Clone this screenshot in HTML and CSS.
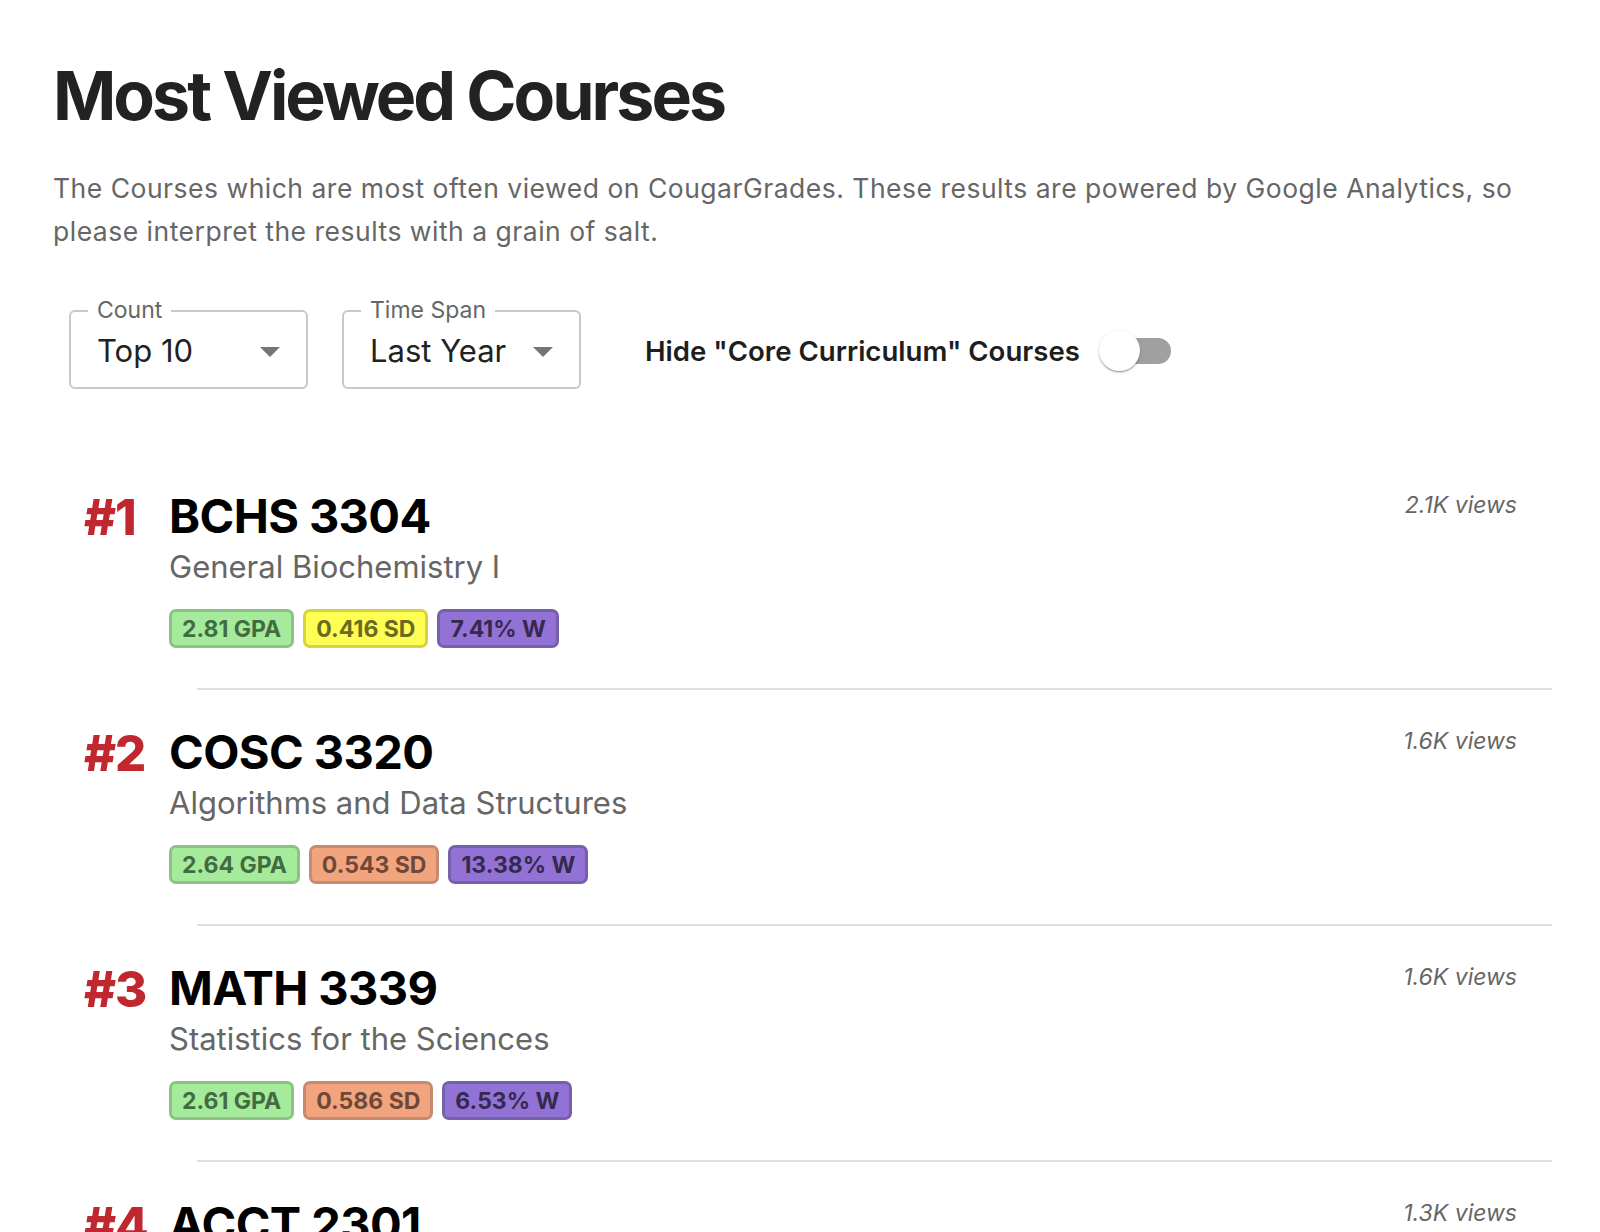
FILE: index.html
```html
<!DOCTYPE html>
<html>
<head>
<meta charset="utf-8">
<link rel="stylesheet" href="styles.css">
</head>
<body>
<main class="page">
  <h1 class="title">Most Viewed Courses</h1>
  <p class="intro">The Courses which are most often viewed on CougarGrades. These results are powered by Google Analytics, so please interpret the results with a grain of salt.</p>

  <div class="controls">
    <div class="select">
      <span class="select-label">Count</span>
      <span class="select-value">Top 10</span>
      <span class="caret"></span>
    </div>
    <div class="select">
      <span class="select-label">Time Span</span>
      <span class="select-value">Last Year</span>
      <span class="caret"></span>
    </div>
    <label class="switch-row">
      <span class="switch-text">Hide "Core Curriculum" Courses</span>
      <span class="switch"><span class="track"></span><span class="thumb"></span></span>
    </label>
  </div>

  <ul class="list">
    <li class="item">
      <div class="rank">#1</div>
      <div class="body">
        <div class="code">BCHS 3304</div>
        <div class="name">General Biochemistry I</div>
        <div class="badges">
          <span class="badge gpa">2.81 GPA</span>
          <span class="badge sd-yellow">0.416 SD</span>
          <span class="badge wd">7.41% W</span>
        </div>
      </div>
      <div class="views">2.1K views</div>
    </li>
    <li class="divider"></li>
    <li class="item">
      <div class="rank">#2</div>
      <div class="body">
        <div class="code">COSC 3320</div>
        <div class="name">Algorithms and Data Structures</div>
        <div class="badges">
          <span class="badge gpa">2.64 GPA</span>
          <span class="badge sd-orange">0.543 SD</span>
          <span class="badge wd">13.38% W</span>
        </div>
      </div>
      <div class="views">1.6K views</div>
    </li>
    <li class="divider"></li>
    <li class="item">
      <div class="rank">#3</div>
      <div class="body">
        <div class="code">MATH 3339</div>
        <div class="name">Statistics for the Sciences</div>
        <div class="badges">
          <span class="badge gpa">2.61 GPA</span>
          <span class="badge sd-orange">0.586 SD</span>
          <span class="badge wd">6.53% W</span>
        </div>
      </div>
      <div class="views">1.6K views</div>
    </li>
    <li class="divider"></li>
    <li class="item">
      <div class="rank">#4</div>
      <div class="body">
        <div class="code">ACCT 2301</div>
      </div>
      <div class="views">1.3K views</div>
    </li>
  </ul>
</main>
</body>
</html>
```

FILE: styles.css
```css
* { box-sizing: border-box; }
html, body { margin: 0; padding: 0; background: #fff; }
html { height: 1232px; overflow: hidden; }
body { font-family: Inter, "Noto Sans", sans-serif; color: #222; }

.page { padding: 52px 48px 0 53px; }

.title {
  margin: 0;
  font-size: 68px;
  line-height: 86px;
  font-weight: 700;
  letter-spacing: -3px;
  color: #222;
}

.intro {
  margin: 29px 0 0;
  font-size: 26.5px;
  line-height: 43px;
  letter-spacing: 0.5px;
  color: #666;
  max-width: 1500px;
}

.controls {
  display: flex;
  align-items: center;
  margin: 57px 0 0 16px;
}

.select {
  position: relative;
  width: 239px;
  height: 79px;
  border: 2px solid #c8c8c8;
  border-radius: 6px;
  margin-right: 34px;
  display: flex;
  align-items: center;
  padding-left: 26px;
}
.select-label {
  position: absolute;
  left: 17px;
  top: -16px;
  padding: 0 9px;
  background: #fff;
  font-size: 23px;
  line-height: 28px;
  color: #666;
}
.select-value {
  font-size: 31px;
  color: #222;
  margin-top: 2px;
}
.caret {
  position: absolute;
  right: 26px;
  top: 35px;
  width: 0; height: 0;
  border-left: 10px solid transparent;
  border-right: 10px solid transparent;
  border-top: 10px solid #757575;
}

.switch-row {
  display: flex;
  align-items: center;
  margin-left: 30px;
  margin-top: 2px;
}
.switch-text {
  font-size: 27.6px;
  font-weight: 600;
  color: #1e1e1e;
}
.switch {
  position: relative;
  width: 74px;
  height: 44px;
  margin-left: 19px;
}
.track {
  position: absolute;
  left: 12px; top: 9px;
  width: 60px; height: 26px;
  border-radius: 13px;
  background: #a0a0a0;
}
.thumb {
  position: absolute;
  left: 0; top: 1px;
  width: 41px; height: 41px;
  border-radius: 50%;
  background: #fff;
  box-shadow: 0 2px 2px -1px rgba(0,0,0,.25), 0 1px 3px 0 rgba(0,0,0,.2), 0 1px 1px 0 rgba(0,0,0,.1);
}

.list {
  list-style: none;
  margin: 87px 0 0;
  padding: 0;
}
.item {
  display: flex;
  align-items: flex-start;
  padding: 0 35px 0 31px;
  height: 212px;
}
.rank {
  width: 85px;
  flex: none;
  font-size: 49px;
  font-weight: 800;
  color: #c0272f;
  line-height: 60px;
  margin-top: 12px;
  letter-spacing: -1px;
}
.body { flex: 1; }
.code {
  font-size: 47px;
  font-weight: 700;
  color: #000;
  line-height: 60px;
  margin-top: 10px;
  letter-spacing: -0.6px;
}
.name {
  font-size: 31px;
  color: #666;
  line-height: 40px;
  margin-top: 1px;
}
.badges {
  display: flex;
  gap: 9px;
  margin-top: 22px;
}
.badge {
  display: inline-flex;
  align-items: center;
  height: 39px;
  padding: 0 10px;
  border: 3px solid;
  border-radius: 7px;
  font-size: 23px;
  font-weight: 700;
}
.gpa { background: #a6eb9c; border-color: #8cc286; color: #436b41; }
.sd-yellow { background: #fefe55; border-color: #d6d341; color: #6a6a22; }
.sd-orange { background: #f2a47f; border-color: #c58a70; color: #6e4838; }
.wd { background: #9272d4; border-color: #7561a9; color: #35294f; }

.views {
  font-size: 23px;
  font-style: italic;
  color: #666;
  margin-top: 15px;
}

.divider {
  height: 2px;
  background: #e0e0e0;
  margin: 0 0 22px 144px;
}
```
